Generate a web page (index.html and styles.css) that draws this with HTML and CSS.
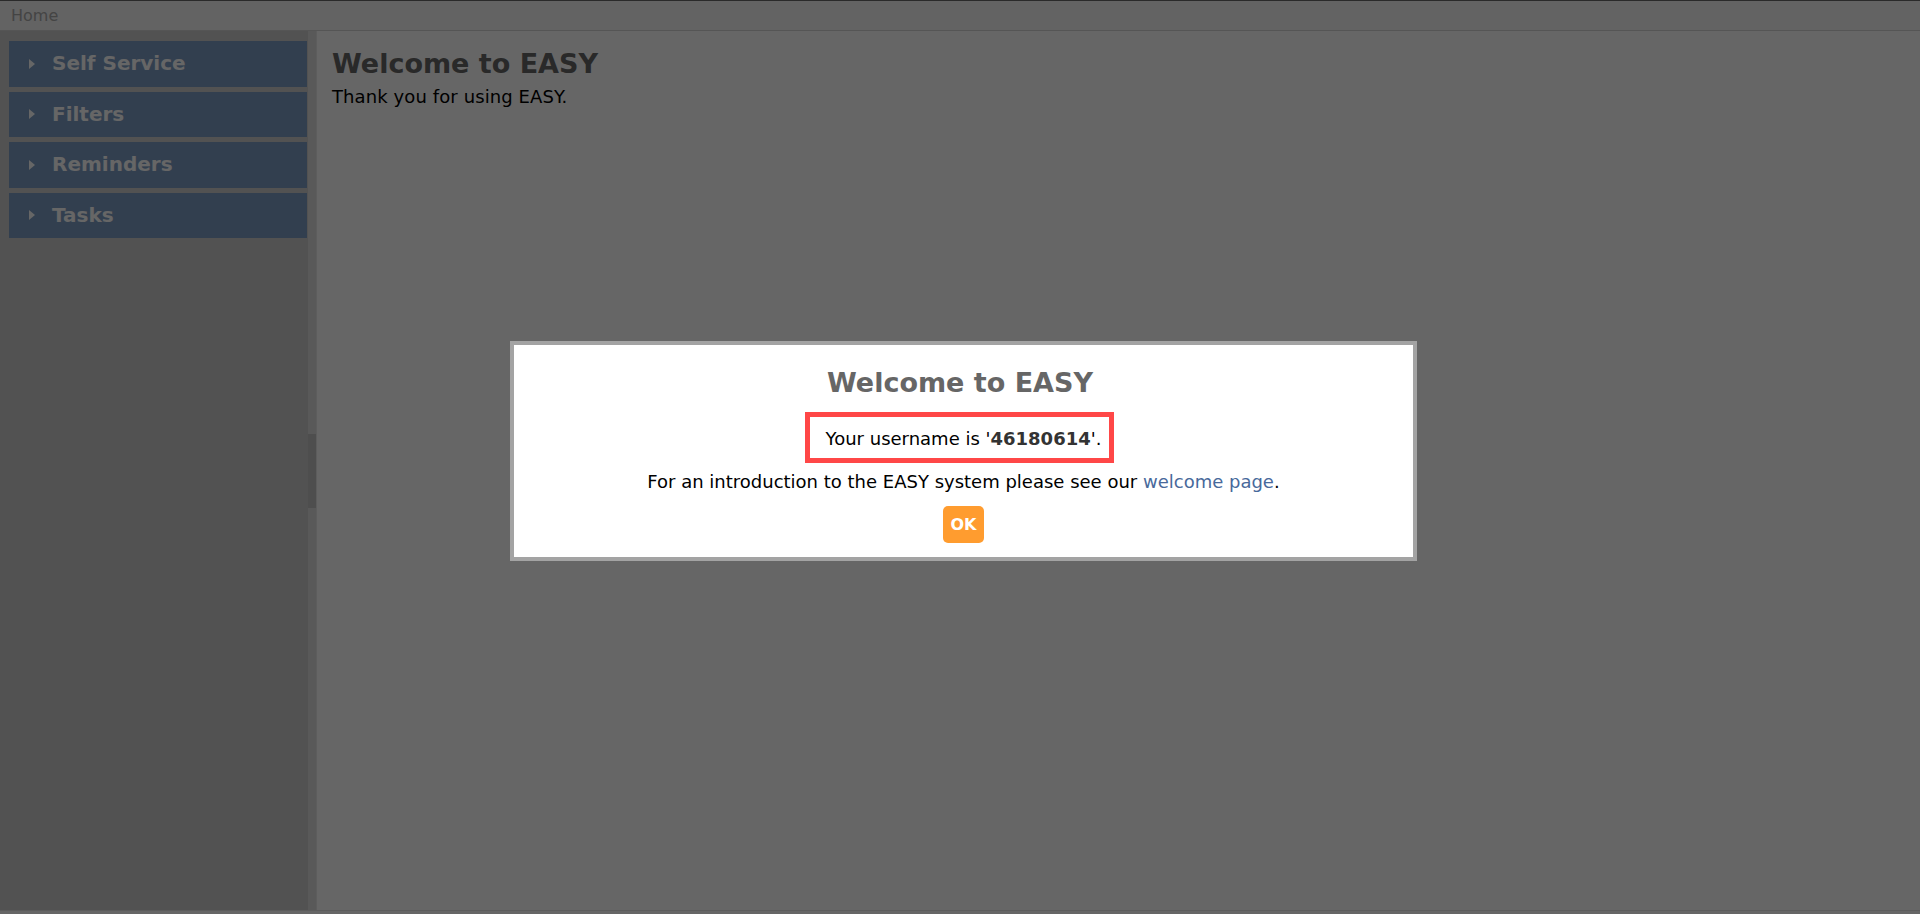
FILE: index.html
```html
<!DOCTYPE html>
<html lang="en">
<head>
    <meta charset="UTF-8">
    <meta name="viewport" content="width=device-width, initial-scale=1.0">
    <title>EASY - Home</title>
    <link rel="stylesheet" href="styles.css">
</head>
<body>
    <div class="breadcrumb">Home</div>
    <div class="layout">
        <div class="sidebar">
            <div class="menu-item"><span class="arrow"></span>Self Service</div>
            <div class="menu-item"><span class="arrow"></span>Filters</div>
            <div class="menu-item"><span class="arrow"></span>Reminders</div>
            <div class="menu-item"><span class="arrow"></span>Tasks</div>
        </div>
        <div class="resizer"><div class="toggler"></div></div>
        <div class="content">
            <h1>Welcome to EASY</h1>
            <p>Thank you for using EASY.</p>
        </div>
    </div>

    <div class="overlay"></div>
    <div class="dialog">
        <h1>Welcome to EASY</h1>
        <p class="username">Your username is '<b>46180614</b>'.</p>
        <p class="intro">For an introduction to the EASY system please see our <a href="#">welcome page</a>.</p>
        <button class="ok">OK</button>
    </div>
</body>
</html>
```

FILE: styles.css
```css
* {
    box-sizing: border-box;
}
html, body {
    height: 914px;
    overflow: hidden;
}
body {
    margin: 0;
    font-family: "DejaVu Sans", Verdana, sans-serif;
    background-color: #fff;
    color: #000;
}
.breadcrumb {
    height: 31px;
    border-top: 1px solid #696969;
    border-bottom: 1px solid #d4d4d4;
    background-color: #f7f7f7;
    padding-left: 11px;
    font-size: 16px;
    line-height: 29px;
    color: #aaa;
}
.layout {
    display: flex;
    height: 880px;
    border-bottom: 1px solid #e6e6e6;
}
.sidebar {
    width: 308px;
    background-color: #cdcdcd;
    padding: 10px 1px 0 9px;
    display: flex;
    flex-direction: column;
    gap: 5px;
}
.menu-item {
    height: 45.5px;
    background-color: #7d9dc5;
    color: #fff;
    font-size: 20px;
    font-weight: bold;
    line-height: 45px;
    padding-left: 20px;
    display: flex;
    align-items: center;
}
.arrow {
    width: 0;
    height: 0;
    border-left: 6px solid #fff;
    border-top: 5px solid transparent;
    border-bottom: 5px solid transparent;
    margin-right: 17px;
}
.resizer {
    width: 9px;
    background-color: #dedede;
    border-right: 1px solid #e8e8e8;
    display: flex;
    align-items: center;
}
.toggler {
    width: 8px;
    height: 74px;
    background-color: #c3c3c3;
}
.content {
    flex: 1;
    padding: 17px 15px;
}
h1 {
    margin: 0;
    font-size: 27px;
    line-height: 32px;
    color: #666;
}
.content p {
    margin: 6px 0 0;
    font-size: 18px;
    line-height: 22px;
    letter-spacing: 0.1px;
}
.overlay {
    position: fixed;
    top: 0;
    left: 0;
    right: 0;
    bottom: 0;
    background-color: rgba(0, 0, 0, 0.6);
}
.dialog {
    position: absolute;
    left: 510px;
    top: 341px;
    width: 907px;
    height: 220px;
    border: 4px solid #a3a3a3;
    background-color: #fff;
    padding-top: 22px;
    text-align: center;
}
.dialog h1 {
    padding-right: 7px;
}
.username {
    display: inline-block;
    margin: 13px 0 0 -8px;
    border: 5px solid #ff4747;
    padding: 2px 8px 0 16px;
    font-size: 18px;
    line-height: 39px;
}
.username b {
    color: #333;
}
.intro {
    margin: 8px 0 0;
    font-size: 18px;
    line-height: 22px;
}
.intro a {
    color: #48699b;
    text-decoration: none;
}
.ok {
    display: block;
    margin: 13px auto 0;
    width: 41px;
    height: 37px;
    padding: 0;
    border: none;
    border-radius: 5px;
    background-color: #ff9c2f;
    color: #fff;
    font-family: "DejaVu Sans", Verdana, sans-serif;
    font-size: 16px;
    font-weight: bold;
    cursor: pointer;
}
```
